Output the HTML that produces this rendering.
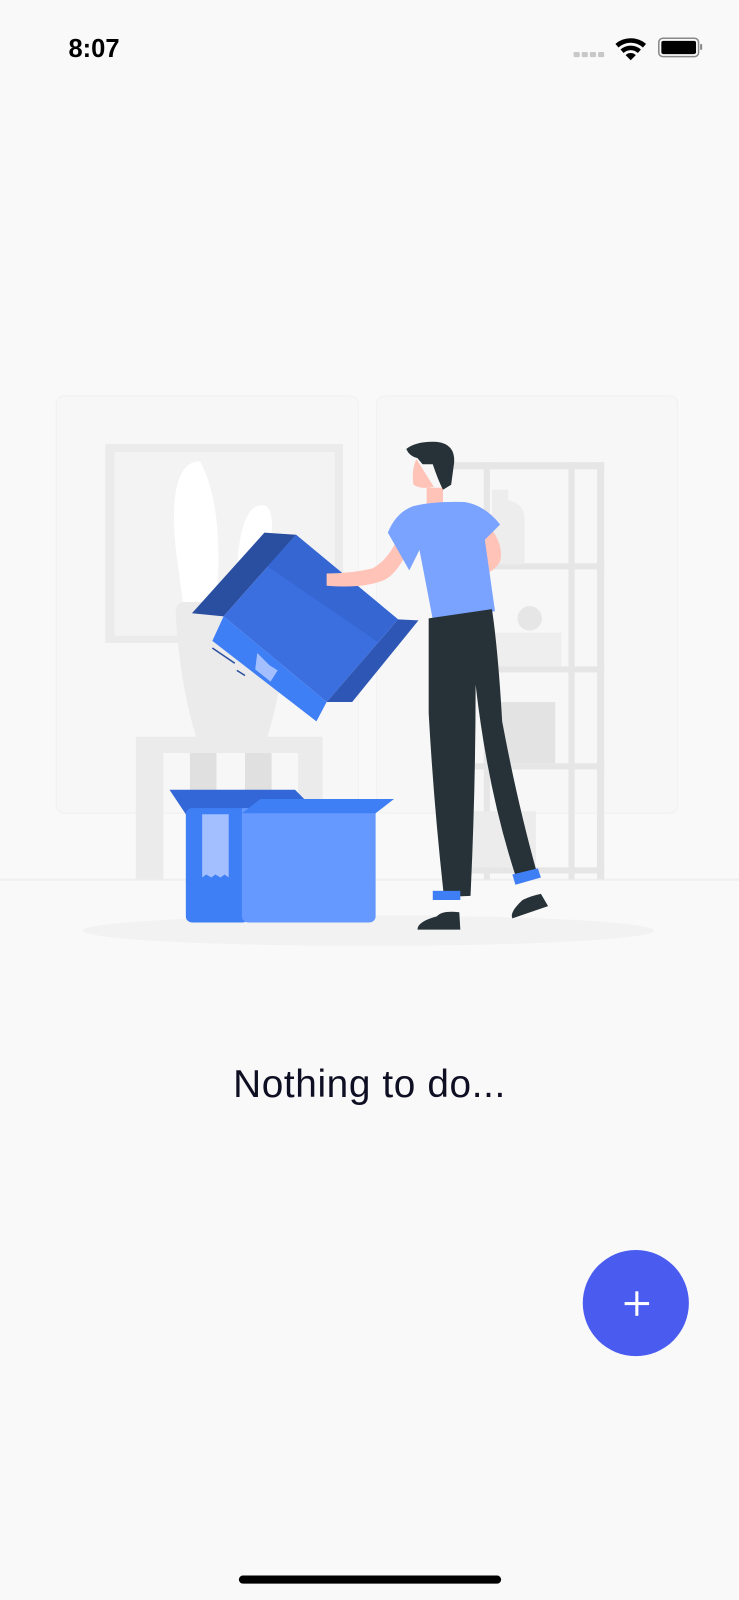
<!DOCTYPE html>
<html><head><meta charset="utf-8"><style>
html,body{margin:0;padding:0;background:#f9f9f9;width:739px;height:1600px;overflow:hidden}
svg{display:block}
</style></head><body>
<svg width="739" height="1600" viewBox="0 0 724 1568" xmlns="http://www.w3.org/2000/svg">
<rect width="724" height="1568" fill="#f9f9f9"/>
<text x="67" y="56" font-family="Liberation Sans, sans-serif" font-weight="700" font-size="25" fill="#000">8:07</text>
<g fill="#c8c8c8"><rect x="562" y="51" width="6" height="5" rx="1"/><rect x="570" y="51" width="6" height="5" rx="1"/><rect x="578" y="51" width="6" height="5" rx="1"/><rect x="586" y="51" width="6" height="5" rx="1"/></g>
<g fill="#000"><path d="M603 43 a23 23 0 0 1 30 0 l-3 3.5 a18 18 0 0 0 -24 0z"/><path d="M608 48.5 a15 15 0 0 1 20 0 l-3 3.5 a10 10 0 0 0 -14 0z"/><path d="M613 54 a7 7 0 0 1 10 0 l-5 5z"/></g>
<rect x="645.5" y="37.5" width="39" height="18" rx="4" fill="none" stroke="#888" stroke-width="1.5"/>
<rect x="648" y="40" width="34" height="13" rx="2" fill="#000"/>
<rect x="686" y="43" width="2" height="6" rx="1" fill="#888"/>

<rect x="55" y="388" width="296" height="409" rx="8" fill="#f7f7f7" stroke="#f0f0f0"/>
<rect x="369" y="388" width="295" height="409" rx="8" fill="#f7f7f7" stroke="#f0f0f0"/>
<line x1="0" y1="862" x2="724" y2="862" stroke="#efefef" stroke-width="2"/>
<rect x="103" y="435" width="233" height="195" fill="#ebebeb"/>
<rect x="112" y="443" width="216" height="180" fill="#f3f3f3"/>
<path d="M196 452 c-30 0 -28 60 -22 100 l8 60 h30 c0 -40 10 -110 -16 -160z" fill="#fff"/>
<path d="M257 495 c-20 0 -25 40 -25 80 h25 c10 -40 15 -80 0 -80z" fill="#fff"/>
<path d="M172 600 q0 -10 10 -10 h90 q10 0 10 10 q-4 70 -20 122 h-70 q-16 -52 -20 -122z" fill="#ebebeb"/>
<rect x="133" y="722" width="183" height="16" fill="#ebebeb"/>
<rect x="133" y="738" width="27" height="124" fill="#ebebeb"/>
<rect x="186" y="738" width="26" height="124" fill="#e0e0e0"/>
<rect x="240" y="738" width="26" height="124" fill="#e0e0e0"/>
<rect x="292" y="738" width="24" height="124" fill="#ebebeb"/>
<g fill="#e6e6e6">
<rect x="440" y="453" width="152" height="7"/>
<rect x="474" y="453" width="6" height="409"/>
<rect x="557" y="453" width="6" height="409"/>
<rect x="585" y="453" width="7" height="409"/>
<rect x="440" y="552" width="152" height="6"/>
<rect x="440" y="653" width="152" height="6"/>
<rect x="440" y="748" width="152" height="6"/>
<rect x="440" y="850" width="152" height="6"/>
</g>
<path d="M482 480 h16 v10 q16 4 16 18 v45 h-32z" fill="#ededed"/>
<circle cx="519" cy="606" r="12" fill="#e6e6e6"/>
<rect x="482" y="620" width="68" height="33" fill="#eeeeee"/>
<rect x="490" y="688" width="54" height="60" fill="#e3e3e3"/>
<rect x="450" y="795" width="75" height="55" fill="#ececec"/>
<ellipse cx="361" cy="912" rx="280" ry="15" fill="#f2f2f2"/>
<path d="M166 774 h123 l10 10 l-62 14 h-55z" fill="#3366d6"/>
<rect x="182" y="792" width="62" height="112" rx="6" fill="#3f7ff5"/>
<rect x="237" y="792" width="131" height="112" rx="6" fill="#6699ff"/>
<rect x="237" y="792" width="131" height="6" fill="#6699ff"/>
<path d="M237 797 l18 -14 h131 l-18 14z" fill="#3f7ff5"/>
<path d="M198 798 h26 v62 l-4 -3 l-4 3 l-5 -3 l-4 3 l-5 -3 l-4 3z" fill="#a3bfff"/>
<polygon points="188,601 259,522 290,524 219,604" fill="#2b4fa0"/>
<polygon points="219,604 290,524 390,607 320,688" fill="#3b6fe0"/>
<polygon points="262,555 290,524 390,607 370,629" fill="#3566d2"/>
<polygon points="320,688 390,607 410,608 345,688" fill="#2e56b5"/>
<polygon points="219,604 320,688 310,707 208,628" fill="#3f7ff5"/>
<polygon points="252,640 264,652 272,657 265,668 250,656" fill="#a3bfff"/>
<line x1="208" y1="635" x2="230" y2="650" stroke="#2b4fa0" stroke-width="1.5"/>
<line x1="232" y1="657" x2="240" y2="662" stroke="#2b4fa0" stroke-width="1.5"/>
<path d="M320 562 q25 0 45 -5 q15 -8 25 -30 l10 12 q-12 25 -25 30 q-20 8 -55 5z" fill="#ffc3b8"/>
<path d="M470 505 q25 25 20 45 q-5 10 -20 15 l-5 -10 q12 -8 10 -15 q-3 -10 -12 -20z" fill="#ffc3b8"/>
<rect x="418" y="478" width="16" height="18" fill="#ffc3b8"/>
<path d="M380 522 q8 -20 25 -26 q20 -5 50 -4 q20 3 35 22 l-15 15 l10 70 l-61 8 l-13 -68 l-10 20 z" fill="#7aa2ff"/>
<path d="M420 606 l62 -9 q6 40 10 110 q15 80 34 148 l-20 6 q-28 -85 -40 -190 q0 100 -5 207 l-26 1 q-10 -90 -15 -180 z" fill="#263238"/>
<rect x="424" y="873" width="27" height="9" fill="#3f7ff5"/>
<path d="M502 857 l25 -6 l3 9 l-25 7z" fill="#3f7ff5"/>
<path d="M428 898 q5 -6 22 -4 l1 17 h-42 q0 -8 19 -13z" fill="#263238"/>
<path d="M512 882 q8 -4 18 -6 l7 12 l-35 12 q-3 -6 10 -18z" fill="#263238"/>
<path d="M408 450 q-5 10 -3 25 q8 5 20 2 z" fill="#ffc3b8"/>
<path d="M398 440 q10 -8 30 -7 q18 2 17 20 l-3 22 l-8 5 q-5 -10 -10 -25 l-10 0 l-5 -6 q-8 -2 -11 -9z" fill="#263238"/>

<text x="362" y="1075" text-anchor="middle" font-family="Liberation Sans, sans-serif" font-size="38" letter-spacing="0.6" fill="#0f0f23">Nothing to do...</text>
<circle cx="623" cy="1277" r="52" fill="#4a5cf0"/>
<rect x="612" y="1276" width="24" height="3" fill="#fff"/>
<rect x="622.5" y="1265.5" width="3" height="24" fill="#fff"/>
<rect x="234" y="1544" width="257" height="8" rx="4" fill="#000"/>
</svg>
</body></html>
